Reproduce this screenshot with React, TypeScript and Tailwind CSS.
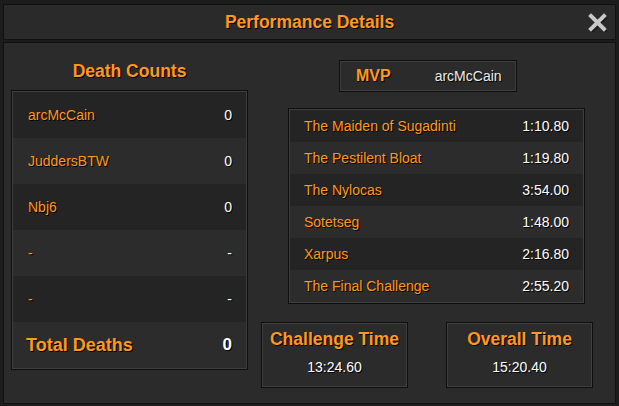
import React from 'react';

const deaths = [
  { name: 'arcMcCain', count: '0' },
  { name: 'JuddersBTW', count: '0' },
  { name: 'Nbj6', count: '0' },
  { name: '-', count: '-' },
  { name: '-', count: '-' },
];

const rooms = [
  { name: 'The Maiden of Sugadinti', time: '1:10.80' },
  { name: 'The Pestilent Bloat', time: '1:19.80' },
  { name: 'The Nylocas', time: '3:54.00' },
  { name: 'Sotetseg', time: '1:48.00' },
  { name: 'Xarpus', time: '2:16.80' },
  { name: 'The Final Challenge', time: '2:55.20' },
];

const shadow = '[text-shadow:1px_1px_0_#000]';

function Box({ className, children }: { className?: string; children: React.ReactNode }) {
  return (
    <div className={`border border-[#0e0e0e] ${className ?? ''}`}>
      <div className="border border-[#3f3f3f] h-full">{children}</div>
    </div>
  );
}

export default function App() {
  return (
    <div className="w-[619px] h-[406px] bg-[#1c1c1c] flex flex-col px-[3px] pt-[4px] pb-[2px] gap-[2px] font-['Liberation_Sans',sans-serif]">
      {/* title bar */}
      <div className="relative h-[36px] shrink-0 border border-[#111] bg-[#2a2a2a] flex items-center justify-center">
        <h1 className={`text-[17.5px] leading-[20px] font-bold text-[#ff981f] ${shadow}`}>
          Performance Details
        </h1>
        <button className="absolute right-[8px] top-[8px] w-[19px] h-[19px]">
          <svg viewBox="0 0 19 19" className="w-[19px] h-[19px]">
            <path d="M3 3 L16 16 M16 3 L3 16" stroke="#000" strokeWidth="4" strokeLinecap="square" transform="translate(1 1)" opacity="0.6" />
            <path d="M3 3 L16 16 M16 3 L3 16" stroke="#c8c8c8" strokeWidth="4" strokeLinecap="square" />
          </svg>
        </button>
      </div>

      {/* content */}
      <div className="flex-1 border border-[#111] bg-[#2b2b2b] flex">
        <div className="w-[244px] pl-[7px] flex flex-col shrink-0">
          <div className="h-[47px] flex items-end justify-center pb-[9px]">
            <h2 className={`text-[17.5px] leading-[20px] font-bold text-[#ff981f] ${shadow}`}>Death Counts</h2>
          </div>
          <Box className="w-[237px]">
            {deaths.map((d, i) => (
              <div
                key={i}
                className={`h-[46px] flex items-center justify-between pl-[15px] pr-[14px] text-[14px] ${shadow} ${i % 2 === 0 ? 'bg-[#242424]' : 'bg-[#2c2c2c]'}`}
              >
                <span className="text-[#ff981f]">{d.name}</span>
                <span className="text-white">{d.count}</span>
              </div>
            ))}
            <div className={`h-[46px] flex items-center justify-between pl-[13px] pr-[14px] bg-[#2c2c2c] font-bold ${shadow}`}>
              <span className="text-[18px] text-[#ff981f]">Total Deaths</span>
              <span className="text-[17px] text-white">0</span>
            </div>
          </Box>
        </div>

        <div className="flex-1 flex flex-col">
          <Box className="mt-[17px] ml-[91px] w-[178px] h-[32px] bg-[#2b2b2b]">
            <div className={`h-full flex items-center ${shadow}`}>
              <span className="ml-[15px] text-[16px] font-bold text-[#ff981f]">MVP</span>
              <span className="ml-[44px] text-[14px] text-[#ececec]">arcMcCain</span>
            </div>
          </Box>

          <Box className="mt-[16px] ml-[40px] w-[297px]">
            {rooms.map((r, i) => (
              <div
                key={r.name}
                className={`h-[32px] flex items-center justify-between pl-[14px] pr-[14px] text-[14px] ${shadow} ${i % 2 === 0 ? 'bg-[#242424]' : 'bg-[#2c2c2c]'}`}
              >
                <span className="text-[#ff981f]">{r.name}</span>
                <span className="text-white">{r.time}</span>
              </div>
            ))}
          </Box>

          <div className="mt-[18px] ml-[13px] flex gap-[38px]">
            {[
              { label: 'Challenge Time', value: '13:24.60' },
              { label: 'Overall Time', value: '15:20.40' },
            ].map((t) => (
              <Box key={t.label} className="w-[147px] h-[66px] bg-[#2b2b2b]">
                <div className={`h-full flex flex-col items-center pt-[5px] ${shadow}`}>
                  <span className="text-[17.5px] leading-[20px] font-bold text-[#ff981f]">{t.label}</span>
                  <span className="mt-[9px] text-[14px] leading-[18px] text-white">{t.value}</span>
                </div>
              </Box>
            ))}
          </div>
        </div>
      </div>
    </div>
  );
}
